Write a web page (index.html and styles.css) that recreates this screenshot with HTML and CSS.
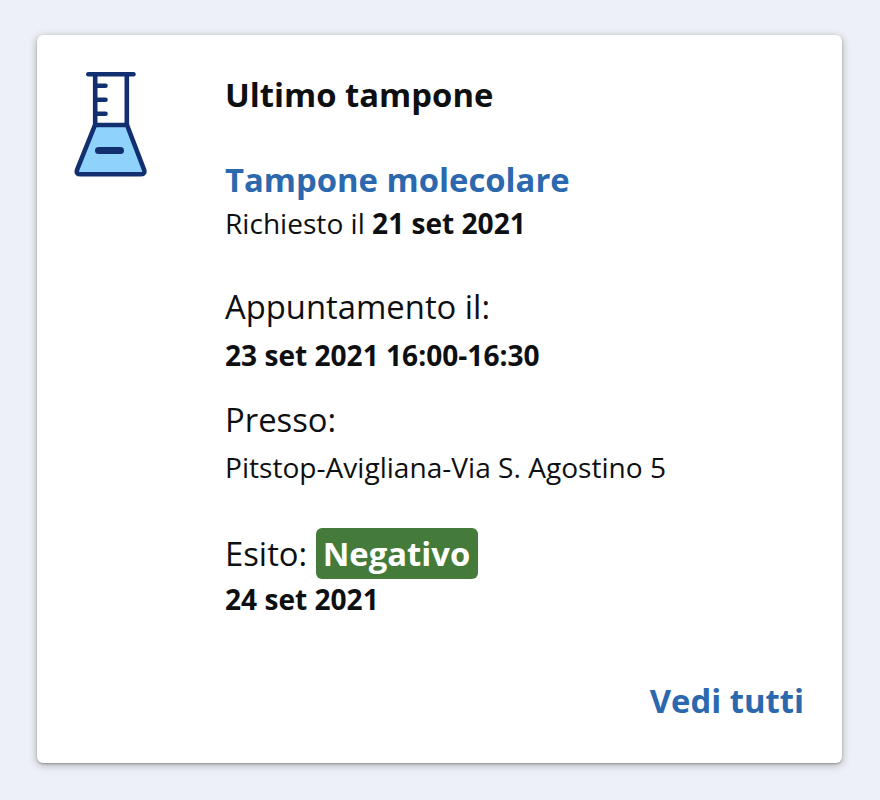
FILE: index.html
```html
<!DOCTYPE html>
<html lang="it">

<head>
    <meta charset="utf-8">
    <title>Ultimo tampone</title>
    <link rel="stylesheet" href="styles.css">
</head>

<body>
    <div class="card">
        <svg class="icon" width="74" height="108" viewBox="0 0 74 108" fill="none" stroke="#12306f" stroke-width="4.6" stroke-linecap="round" stroke-linejoin="round">
            <path d="M21 54H53L70 98.500Q71.500 103.300 67 103.300H6.500Q1.500 103.300 3.200 98.500Z" fill="#8fd3fb" />
            <path d="M21.200 54V4M52.800 54V4M14.300 3.300H59.500" />
            <path d="M22 14.700H31.500M22 28.700H31.500M22 42.700H31.500" />
            <path d="M24.500 79.500H46.500" stroke-width="7" />
        </svg>
        <div class="content">
            <h2 class="title">Ultimo tampone</h2>
            <h3 class="test-name">Tampone molecolare</h3>
            <p class="small">Richiesto il <b>21 set 2021</b></p>
            <p class="label appointment">Appuntamento il:</p>
            <p class="small"><b>23 set 2021 16:00-16:30</b></p>
            <p class="label place">Presso:</p>
            <p class="small">Pitstop-Avigliana-Via S. Agostino 5</p>
            <p class="label result">Esito: <span class="badge">Negativo</span></p>
            <p class="small"><b>24 set 2021</b></p>
            <a class="link" href="#">Vedi tutti</a>
        </div>
    </div>
</body>

</html>
```

FILE: styles.css
```css
body {
    box-sizing: border-box;
    min-height: 100vh;
    margin: 0;
    padding: 35px 38px 37px 37px;
    background-color: #edf1f7;
    font-family: "Open Sans", sans-serif;
    color: #0e0f11;
}

.card {
    box-sizing: border-box;
    display: flex;
    height: 728px;
    padding: 36px 38px 0 37px;
    background-color: #fff;
    border-radius: 6px;
    box-shadow: 0 2px 8px rgba(0, 0, 0, 0.3), 0 1px 2px rgba(0, 0, 0, 0.25);
}

.icon {
    flex: none;
    margin-right: 77px;
}

.content {
    display: flex;
    flex: 1;
    flex-direction: column;
}

.title,
.test-name,
.small,
.label {
    margin: 0;
    white-space: nowrap;
}

.title,
.test-name,
.link {
    font-size: 32.8px;
    font-weight: 700;
    line-height: 48px;
}

.test-name {
    margin-top: 37px;
    color: #2b68ae;
}

.small {
    font-size: 28.1px;
    line-height: 40px;
}

.test-name + .small {
    margin-top: -1px;
}

.label {
    font-size: 32.8px;
    line-height: 48px;
}

.appointment {
    margin-top: 40px;
}

.appointment + .small {
    margin-top: 4px;
}

.place {
    margin-top: 21px;
}

.place + .small {
    margin-top: 3px;
}

.result {
    margin-top: 41px;
}

.badge {
    display: inline-block;
    padding: 0 7.5px 0 7px;
    background-color: #457b3a;
    border-radius: 6px;
    color: #fff;
    font-weight: 700;
    line-height: 51px;
}

.link {
    align-self: flex-end;
    margin-top: 58px;
    color: #2b68ae;
    text-decoration: none;
}
```
